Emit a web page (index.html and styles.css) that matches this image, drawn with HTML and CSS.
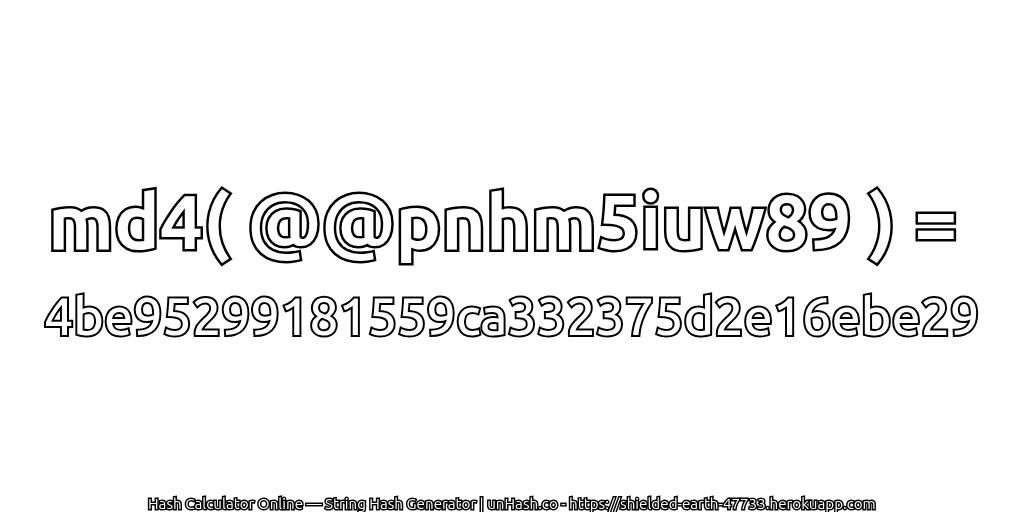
FILE: index.html
```html
<!DOCTYPE html>
<html lang="en">
<head>
<meta charset="utf-8">
<title>md4</title>
<link rel="stylesheet" href="styles.css">
</head>
<body>
<main class="page">
  <div class="hero">
    <div class="title">md4( @@pnhm5iuw89 ) = </div>
    <div class="hash">4be95299181559ca332375d2e16ebe29</div>
  </div>
  <div class="foot">Hash Calculator Online — String Hash Generator | unHash.co - https://shielded-earth-47733.herokuapp.com</div>
</main>
</body>
</html>
```
FILE: styles.css
```css
html, body { margin: 0; padding: 0; background: #fff; }
.page { width: 1024px; height: 512px; display: flex; flex-direction: column; align-items: center; overflow: hidden; font-family: "Ubuntu", "DejaVu Sans", sans-serif; color: #fff; }
.hero { flex: 1; display: flex; flex-direction: column; justify-content: center; align-items: center; padding-top: 32px; }
.title, .hash, .foot { paint-order: stroke fill; will-change: transform; }
.title { white-space: pre; font-size: 76.5px; line-height: 86px; font-weight: 700; -webkit-text-stroke: 5px #000; }
.hash { white-space: nowrap; margin-top: 18px; font-size: 52px; line-height: 68px; font-weight: 500; -webkit-text-stroke: 4px #000; }
.foot { white-space: nowrap; font-size: 15.2px; line-height: 16px; -webkit-text-stroke: 3px #000; }
```
